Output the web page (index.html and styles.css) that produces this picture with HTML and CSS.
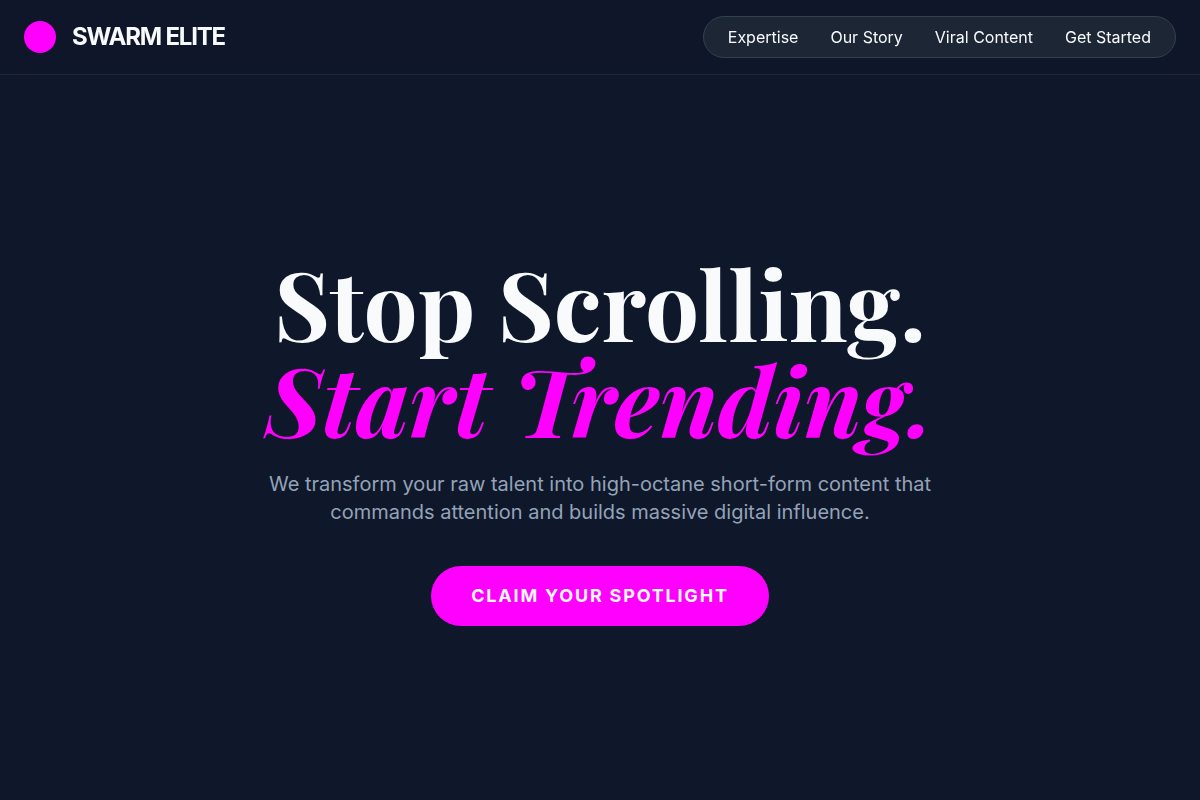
FILE: index.html
```html
<!DOCTYPE html>
<html lang="en">
<head>
  <meta charset="UTF-8">
  <meta name="viewport" content="width=device-width, initial-scale=1.0">
  <title>Swarm Elite</title>
  <link rel="stylesheet" href="styles.css">
</head>
<body>

<header class="site-header">
  <div class="brand">
    <span class="brand-dot"></span>
    <span class="brand-name">SWARM ELITE</span>
  </div>
  <nav class="nav-pill">
    <a href="#expertise">Expertise</a>
    <a href="#story">Our Story</a>
    <a href="#content">Viral Content</a>
    <a href="#start">Get Started</a>
  </nav>
</header>

<main class="hero">
  <h1>Stop Scrolling.<br><em>Start Trending.</em></h1>
  <p>We transform your raw talent into high-octane short-form content that commands attention and builds massive digital influence.</p>
  <button class="cta" type="button">Claim Your Spotlight</button>
</main>

</body>
</html>
```
FILE: styles.css
```css
* {
  box-sizing: border-box;
}

body {
  margin: 0;
  min-height: 100vh;
  display: flex;
  flex-direction: column;
  background: #0f172a;
  color: #f8fafc;
  font-family: "Inter", sans-serif;
  font-size: 16px;
  line-height: 24px;
}

.site-header {
  position: sticky;
  top: 0;
  z-index: 10;
  display: flex;
  justify-content: space-between;
  align-items: center;
  padding: 16px 24px;
  background: rgba(15, 23, 42, 0.8);
  backdrop-filter: blur(12px);
  border-bottom: 1px solid #1f2737;
}

.brand {
  display: flex;
  align-items: center;
  gap: 16px;
}

.brand-dot {
  width: 32px;
  height: 32px;
  border-radius: 50%;
  background: #ff00ff;
}

.brand-name {
  font-size: 24px;
  font-weight: 700;
  line-height: 32px;
  letter-spacing: -0.05em;
}

.nav-pill {
  display: flex;
  gap: 32px;
  padding: 8px 24px;
  background: #1c2635;
  border: 1px solid #33414d;
  border-radius: 999px;
}

.nav-pill a {
  color: inherit;
  text-decoration: none;
}

.hero {
  flex: 1;
  display: flex;
  flex-direction: column;
  align-items: center;
  justify-content: center;
  padding: 24px 24px 20px;
  text-align: center;
}

.hero h1 {
  margin: 0 0 24px;
  font-family: "Playfair Display", "Liberation Serif", serif;
  font-size: 96px;
  font-weight: 700;
  line-height: 96px;
}

.hero h1 em {
  color: #ff00ff;
}

.hero p {
  max-width: 672px;
  margin: 0 0 40px;
  color: #94a3b8;
  font-size: 20px;
  line-height: 28px;
}

.cta {
  padding: 16px 40px;
  border: none;
  border-radius: 999px;
  background: #ff00ff;
  color: #f8fafc;
  font-family: inherit;
  font-size: 18px;
  font-weight: 700;
  line-height: 28px;
  letter-spacing: 0.1em;
  text-transform: uppercase;
  cursor: pointer;
}
```
